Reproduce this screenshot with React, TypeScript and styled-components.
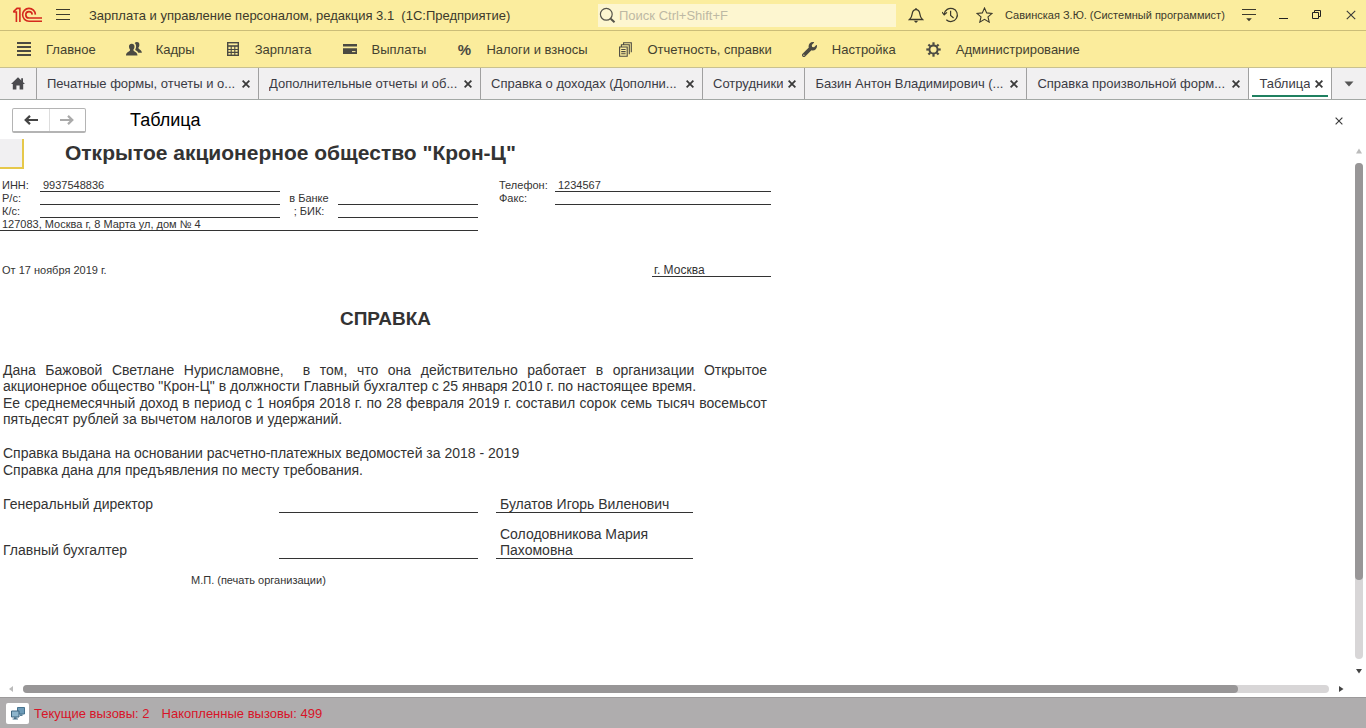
import React from "react";
import styled, { createGlobalStyle, css } from "styled-components";
import { FaWrench } from "react-icons/fa";

const GlobalStyle = createGlobalStyle`
  *, *::before, *::after { box-sizing: border-box; }
  body {
    margin: 0;
    background: #fff;
    color: #333;
    font-family: "Liberation Sans", Arial, sans-serif;
    font-size: 13px;
  }
  button, input { font: inherit; color: inherit; }
  h1, h2, p { margin: 0; }
`;

const Shell = styled.div`
  display: flex;
  flex-direction: column;
  min-height: 100vh;
`;

const plainButton = css`
  display: flex;
  align-items: center;
  justify-content: center;
  flex: none;
  padding: 0;
  border: 0;
  background: none;
  cursor: pointer;
`;

/* Title bar */

const TitleBar = styled.header`
  display: flex;
  align-items: center;
  height: 31px;
  background: #fbed9e;
  border-bottom: 1px solid #cbbd78;
`;

const TitleLeft = styled.div`
  display: flex;
  flex: 1;
  align-items: center;
  min-width: 0;
  gap: 10px;
  padding-left: 13px;
`;

const AppTitle = styled.span`
  padding-left: 6px;
  white-space: pre;
  color: #3c3a2c;
`;

const SearchBox = styled.label`
  display: flex;
  align-items: center;
  width: 298px;
  height: 23px;
  gap: 3px;
  padding-left: 1px;
  background: #fdf6d0;
`;

const SearchInput = styled.input`
  flex: 1;
  min-width: 0;
  padding: 0;
  border: 0;
  outline: 0;
  background: none;
  &::placeholder { color: #bdb9a4; opacity: 1; }
`;

const TitleRight = styled.div`
  display: flex;
  align-items: center;
  gap: 11px;
  padding: 0 5px 0 10px;
`;

const IconGroup = styled.div`
  display: flex;
  gap: 14px;
`;

const IconButton = styled.button`
  ${plainButton}
  width: 20px;
  height: 20px;
`;

const UserName = styled.span`
  min-width: 223px;
  font-size: 11px;
  white-space: nowrap;
  color: #3c3a2c;
`;

/* Section menu */

const Menu = styled.nav`
  display: flex;
  align-items: center;
  height: 37px;
  gap: 30px;
  padding-left: 16px;
  background: #fbec9c;
  border-bottom: 1px solid #c9c18f;
`;

const MenuItem = styled.a`
  display: flex;
  align-items: center;
  gap: 14px;
  color: #43412f;
  text-decoration: none;
  white-space: nowrap;
`;

const MenuIcon = styled.span`
  display: flex;
  align-items: center;
  justify-content: center;
  width: 16px;
  height: 18px;
  color: #4b4a42;
  font-size: 15px;
  font-weight: bold;
`;

/* Tabs */

const TabStrip = styled.div`
  display: flex;
  height: 32px;
  background: #f1f0f1;
  border-bottom: 1px solid #a3a8a5;
`;

const HomeButton = styled.button`
  ${plainButton}
  width: 37px;
  border-right: 1px solid #a0a0a0;
`;

const Tab = styled.div<{ $long?: boolean; $active?: boolean }>`
  position: relative;
  display: flex;
  align-items: center;
  flex: ${(p) => (p.$long ? "0 1 222px" : "0 0 auto")};
  min-width: 0;
  gap: 4px;
  padding: 0 7px 0 10px;
  border-right: 1px solid #a0a0a0;
  background: ${(p) => (p.$active ? "#fff" : "none")};
  ${(p) =>
    p.$active &&
    css`
      &::after {
        content: "";
        position: absolute;
        left: 3px;
        right: 3px;
        bottom: 2px;
        height: 2px;
        background: #1f8060;
      }
    `}
`;

const TabLabel = styled.span`
  flex: 1;
  overflow: hidden;
  white-space: nowrap;
  color: #3b3b44;
`;

const TabClose = styled.button`
  ${plainButton}
  width: 10px;
  height: 14px;
`;

const TabList = styled.button`
  ${plainButton}
  flex: 1;
  min-width: 28px;
`;

/* Form header */

const FormHead = styled.div`
  display: flex;
  align-items: center;
  height: 39px;
  gap: 44px;
  padding: 2px 20px 0 12px;
`;

const NavPair = styled.div`
  display: flex;
  width: 74px;
  height: 25px;
  border: 1px solid #b4b4b4;
  border-bottom-width: 2px;
  border-radius: 2px;
  background: #fff;
`;

const NavButton = styled.button`
  ${plainButton}
  flex: 1;
  & + & { border-left: 1px solid #ddd; }
`;

const FormTitle = styled.h1`
  flex: 1;
  font-size: 18px;
  font-weight: normal;
  color: #000;
`;

const FormClose = styled.button`
  ${plainButton}
  width: 14px;
  height: 14px;
`;

/* Spreadsheet document */

const Workspace = styled.div`
  display: flex;
  flex: 1;
`;

const Sheet = styled.main`
  flex: 1;
  min-width: 0;
`;

const Page = styled.article`
  width: 771px;
  max-width: 100%;
`;

const OrgRow = styled.div`
  display: flex;
  align-items: flex-start;
  height: 40px;
  gap: 41px;
`;

const ActiveCell = styled.div`
  width: 24px;
  height: 30px;
  background: #f1f0f2;
  border: solid #e6c84a;
  border-width: 0 2px 2px 0;
`;

const OrgName = styled.h2`
  font-size: 21px;
  line-height: 28px;
  white-space: nowrap;
`;

const Requisites = styled.div`
  display: grid;
  grid-template-columns: 40px 240px 58px 140px 21px 56px 216px;
  grid-auto-rows: 13px;
  font-size: 11px;
  line-height: 13px;
`;

const Caption = styled.span<{ $column?: number; $center?: boolean }>`
  grid-column: ${(p) => p.$column ?? "auto"};
  padding-left: ${(p) => (p.$center || p.$column ? 0 : 2)}px;
  text-align: ${(p) => (p.$center ? "center" : "left")};
  white-space: nowrap;
`;

const Field = styled.span<{ $wide?: boolean }>`
  grid-column: ${(p) => (p.$wide ? "1 / span 4" : "auto")};
  padding-left: ${(p) => (p.$wide ? 2 : 3)}px;
  border-bottom: 1px solid #333;
  white-space: nowrap;
`;

const DateRow = styled.div`
  display: flex;
  justify-content: space-between;
  margin-top: 33px;
  padding-left: 2px;
  font-size: 11px;
  line-height: 12px;
`;

const City = styled.span`
  width: 119px;
  padding-left: 2px;
  border-bottom: 1px solid #333;
  font-size: 12px;
`;

const DocTitle = styled.h2`
  margin: 30px 0 31px;
  font-size: 19px;
  line-height: 24px;
  text-align: center;
`;

const Paragraph = styled.p<{ $spaced?: boolean }>`
  margin-top: ${(p) => (p.$spaced ? 18 : 1)}px;
  padding: 0 4px 0 3px;
  font-size: 14px;
  line-height: 16px;
  text-align: justify;
`;

const Signature = styled.div<{ $first?: boolean }>`
  display: grid;
  grid-template-columns: 279px 199px 197px;
  margin-top: ${(p) => (p.$first ? 18 : 13)}px;
  font-size: 14px;
  line-height: 16px;
`;

const Post = styled.span`
  align-self: end;
  padding: 0 0 1px 3px;
`;

const SignLine = styled.span`
  border-bottom: 1px solid #333;
`;

const SignName = styled.span`
  margin: 0 -18px 0 18px;
  padding-left: 4px;
  border-bottom: 1px solid #333;
`;

const Stamp = styled.p`
  margin-top: 15px;
  padding-left: 191px;
  font-size: 11px;
  line-height: 13px;
`;

/* Scroll bars */

const VScroll = styled.div`
  display: flex;
  flex-direction: column;
  align-items: center;
  width: 8px;
  gap: 8px;
  margin-right: 3px;
  padding: 8px 0;
`;

const HScroll = styled.div`
  display: flex;
  align-items: center;
  height: 14px;
  gap: 8px;
  padding: 0 21px 2px 7px;
`;

const ScrollArrow = styled.button`
  ${plainButton}
  width: 8px;
  height: 8px;
`;

const Track = styled.div<{ $vertical?: boolean }>`
  flex: 1;
  ${(p) => (p.$vertical ? "width: 8px;" : "height: 8px;")}
  border-radius: 4px;
  background: #d8d6d7;
`;

const Thumb = styled.div<{ $vertical?: boolean }>`
  width: ${(p) => (p.$vertical ? "100%" : "93%")};
  height: ${(p) => (p.$vertical ? "84%" : "100%")};
  border-radius: 4px;
  background: #989697;
`;

/* Status bar */

const StatusBar = styled.footer`
  display: flex;
  align-items: center;
  height: 31px;
  gap: 12px;
  padding: 0 6px;
  border-top: 1px solid #9c9a9b;
  background: #afadae;
  color: #d81428;
`;

const CallsButton = styled.button`
  ${plainButton}
  width: 23px;
  height: 21px;
  margin-right: -7px;
  border-radius: 2px;
  background: #fff;
`;

/* Drawings */

const Logo = () => (
  <svg width="30" height="16" viewBox="0 0 30 16" fill="none" stroke="#d5291d" strokeWidth="1.6">
    <path d="M.2 5H3.4V15M.2 5L4 1.4H6.9V15" />
    <path d="M22.4 7.6A6.4 6.4 0 1 0 16 14.2H29" />
    <path d="M19.2 7.6A3.2 3.2 0 1 0 16 11H29" />
  </svg>
);

const Burger = () => (
  <svg width="14" height="14" viewBox="0 0 14 14" stroke="#3c3a2c">
    <path d="M0 1.5H14M0 6.5H14M0 11.5H14" />
  </svg>
);

const SearchIcon = () => (
  <svg width="17" height="17" viewBox="0 0 17 17" fill="none" stroke="#55534a">
    <circle cx="7.3" cy="7.3" r="5.9" strokeWidth="1.2" />
    <path d="M11.7 11.7L15.5 15.2" strokeWidth="2" />
  </svg>
);

const Bell = () => (
  <svg width="16" height="16" viewBox="0 0 16 16" fill="none" stroke="#3c3a2c" strokeWidth="1.3">
    <path d="M1.5 12.5C3.6 10.8 3.9 9.4 4.2 6.8C4.5 4.2 5.9 2.7 8 2.7S11.5 4.2 11.8 6.8C12.1 9.4 12.4 10.8 14.5 12.5Z" />
    <path d="M8 2.7V1" />
    <path d="M5.7 13.8H10.3L8 16Z" fill="#3c3a2c" stroke="none" />
  </svg>
);

const History = () => (
  <svg width="17" height="16" viewBox="0 0 17 16" fill="none" stroke="#3c3a2c" strokeWidth="1.2">
    <path d="M2.2 7.2A6.6 6.6 0 1 1 4.3 12.8" />
    <path d="M0 5L2.2 7.8L5 5.4" />
    <path d="M8.6 3.8V8.4L11.6 11" />
  </svg>
);

const Star = () => (
  <svg width="17" height="16" viewBox="0 0 17 16" fill="none" stroke="#3c3a2c" strokeWidth="1.1">
    <path d="M8.5 1L10.7 5.9L16 6.4L12 9.9L13.2 15.1L8.5 12.3L3.8 15.1L5 9.9L1 6.4L6.3 5.9Z" />
  </svg>
);

const Options = () => (
  <svg width="14" height="14" viewBox="0 0 14 14" stroke="#3c3a2c" fill="#3c3a2c">
    <path d="M0 1.5H14M0 6.5H14" />
    <path d="M4.2 10.2H9.8L7 13.2Z" stroke="none" />
  </svg>
);

const Minimize = () => (
  <svg width="10" height="10" viewBox="0 0 10 10" stroke="#222">
    <path d="M1 8.5H10" />
  </svg>
);

const Restore = () => (
  <svg width="10" height="10" viewBox="0 0 10 10" fill="none" stroke="#222">
    <path d="M.5 2.5H6.5V8.5H.5ZM2.5 2.5V.5H8.5V6.5H6.5" />
  </svg>
);

const Cross = ({ size = 9, weight = 1 }: { size?: number; weight?: number }) => (
  <svg width={size} height={size} viewBox="0 0 9 9" stroke="#3a3a3a" strokeWidth={weight}>
    <path d="M.7 .7L8.3 8.3M8.3 .7L.7 8.3" />
  </svg>
);

const Lines = () => (
  <svg width="14" height="14" viewBox="0 0 14 14" stroke="currentColor" strokeWidth="2">
    <path d="M0 1H14M0 5H14M0 9H14M0 13H14" />
  </svg>
);

const People = () => (
  <svg width="17" height="16" viewBox="0 0 17 16" fill="currentColor">
    <path d="M11.6 .6C13.5 .6 14.4 1.9 14.2 3.9C14.1 5.3 13.6 6 13.1 6.6C13.1 8.4 16.9 8.6 16.9 12H13C12.4 10.2 10.9 9.7 9.7 9C10.5 7.6 10.9 6 10.6 4.4C10.4 3 9.9 2.2 9.2 1.8C9.7 1 10.5 .6 11.6 .6Z" />
    <path d="M6.1 2.4C8.2 2.4 9.3 3.8 9 6C8.8 7.5 8.3 8.2 7.8 8.8C7.8 11 12.2 10.8 12.2 15H0C0 10.8 4.4 11 4.4 8.8C3.9 8.2 3.4 7.5 3.2 6C2.9 3.8 4 2.4 6.1 2.4Z" />
  </svg>
);

const Calculator = () => (
  <svg width="12" height="14" viewBox="0 0 12 14" fill="none" stroke="currentColor">
    <rect x=".7" y=".7" width="10.6" height="12.6" strokeWidth="1.4" />
    <path d="M1 4H11" strokeWidth="1.6" />
    <path d="M1 7.5H11M1 10.4H11M4.2 4V13M7.8 4V13" strokeWidth="1.1" />
  </svg>
);

const Card = () => (
  <svg width="14" height="10" viewBox="0 0 14 10" fill="currentColor">
    <path d="M0 0H14V2.5H0ZM0 4.2H14V10H0Z" />
    <path d="M9 7.6H12.5" stroke="#fbec9c" />
  </svg>
);

const Papers = () => (
  <svg width="13" height="15" viewBox="0 0 13 15" fill="none" stroke="currentColor" strokeWidth="1.1">
    <path d="M.6 5H8.2V14.2H.6ZM2.4 5V2.8H10.3V12.2M4.6 2.8V.7H12.3V10.2" />
    <path d="M2.2 7.5H6.6M2.2 9.6H6.6M2.2 11.7H6.6" />
  </svg>
);

const Gear = () => (
  <svg width="15" height="15" viewBox="-7.5 -7.5 15 15" fill="none" stroke="currentColor">
    <circle r="4.1" strokeWidth="2" />
    {[0, 45, 90, 135, 180, 225, 270, 315].map((angle) => (
      <path key={angle} d="M0 -4.6V-7.2" strokeWidth="2.2" transform={`rotate(${angle})`} />
    ))}
  </svg>
);

const Home = () => (
  <svg width="14" height="13" viewBox="0 0 14 13" fill="#4a4a4e">
    <path d="M7 .3L14 7H12.2V12.6H8.6V8.4H5.4V12.6H1.8V7H0Z" />
    <path d="M10.2 1.2H12V5H10.2Z" />
  </svg>
);

const Arrow = ({ forward }: { forward?: boolean }) => (
  <svg width="14" height="10" viewBox="0 0 14 10" fill="none" stroke={forward ? "#aaa" : "#444"} strokeWidth="2.2">
    <path d={forward ? "M0 5H12M8 .9L12.3 5L8 9.1" : "M14 5H2M6 .9L1.7 5L6 9.1"} />
  </svg>
);

const arrowShapes = {
  up: "M1 6.5L4 1.5L7 6.5Z",
  down: "M1 2L7 2L4 6.5Z",
  left: "M6 1L2 4L6 7Z",
  right: "M2 1L6.5 4L2 7Z",
};

const SmallArrow = ({ to, pale }: { to: keyof typeof arrowShapes; pale?: boolean }) => (
  <svg width="8" height="8" viewBox="0 0 8 8" fill={pale ? "#bbb" : "#444"}>
    <path d={arrowShapes[to]} />
  </svg>
);

const Computers = () => (
  <svg width="14" height="13" viewBox="0 0 14 13">
    <path d="M6.5 .5H13.5V7H6.5Z" fill="#6d9bb8" stroke="#47738f" />
    <path d="M9 7.2H11.5V9H9Z" fill="#58819b" />
    <path d="M.5 4H8V10H.5Z" fill="#8db5cc" stroke="#3f6680" />
    <path d="M3 10.2H5.6V11.4H7V12.6H1.6V11.4H3Z" fill="#47708a" />
  </svg>
);

const sections = [
  { name: "Главное", icon: <Lines /> },
  { name: "Кадры", icon: <People /> },
  { name: "Зарплата", icon: <Calculator /> },
  { name: "Выплаты", icon: <Card /> },
  { name: "Налоги и взносы", icon: "%" },
  { name: "Отчетность, справки", icon: <Papers /> },
  { name: "Настройка", icon: <FaWrench size={15} /> },
  { name: "Администрирование", icon: <Gear /> },
];

const tabs = [
  { name: "Печатные формы, отчеты и о...", long: true },
  { name: "Дополнительные отчеты и об...", long: true },
  { name: "Справка о доходах (Дополни...", long: true },
  { name: "Сотрудники" },
  { name: "Базин Антон Владимирович (...", long: true },
  { name: "Справка произвольной форм...", long: true },
  { name: "Таблица", active: true },
];

const employment =
  "Дана Бажовой Светлане Нурисламовне,\u00a0 в том, что она действительно работает в организации " +
  'Открытое акционерное общество "Крон-Ц" в должности Главный бухгалтер с 25 января 2010 г. ' +
  "по настоящее время.";

const income =
  "Ее среднемесячный доход в период с 1 ноября 2018 г. по 28 февраля 2019 г. составил сорок семь " +
  "тысяч восемьсот пятьдесят рублей за вычетом налогов и удержаний.";

export default function App() {
  return (
    <Shell>
      <GlobalStyle />
      <TitleBar>
        <TitleLeft>
          <Logo />
          <IconButton aria-label="Меню"><Burger /></IconButton>
          <AppTitle>{"Зарплата и управление персоналом, редакция 3.1  (1С:Предприятие)"}</AppTitle>
        </TitleLeft>
        <SearchBox>
          <SearchIcon />
          <SearchInput type="text" aria-label="Поиск" placeholder="Поиск Ctrl+Shift+F" />
        </SearchBox>
        <TitleRight>
          <IconGroup>
            <IconButton aria-label="Оповещения"><Bell /></IconButton>
            <IconButton aria-label="История"><History /></IconButton>
            <IconButton aria-label="Избранное"><Star /></IconButton>
          </IconGroup>
          <UserName>Савинская З.Ю. (Системный программист)</UserName>
          <IconGroup>
            <IconButton aria-label="Настройки"><Options /></IconButton>
            <IconButton aria-label="Свернуть"><Minimize /></IconButton>
            <IconButton aria-label="Развернуть"><Restore /></IconButton>
            <IconButton aria-label="Закрыть"><Cross size={10} /></IconButton>
          </IconGroup>
        </TitleRight>
      </TitleBar>

      <Menu>
        {sections.map((s) => (
          <MenuItem href="#" key={s.name}>
            <MenuIcon>{s.icon}</MenuIcon>
            {s.name}
          </MenuItem>
        ))}
      </Menu>

      <TabStrip>
        <HomeButton aria-label="Начальная страница"><Home /></HomeButton>
        {tabs.map((t) => (
          <Tab key={t.name} $long={t.long} $active={t.active}>
            <TabLabel>{t.name}</TabLabel>
            <TabClose aria-label="Закрыть вкладку"><Cross size={8} weight={2} /></TabClose>
          </Tab>
        ))}
        <TabList aria-label="Список вкладок">
          <svg width="10" height="6" viewBox="0 0 10 6" fill="#555"><path d="M.5 .5H9.5L5 5.5Z" /></svg>
        </TabList>
      </TabStrip>

      <FormHead>
        <NavPair>
          <NavButton aria-label="Назад"><Arrow /></NavButton>
          <NavButton aria-label="Вперед"><Arrow forward /></NavButton>
        </NavPair>
        <FormTitle>Таблица</FormTitle>
        <FormClose aria-label="Закрыть форму"><Cross size={8} weight={1.3} /></FormClose>
      </FormHead>

      <Workspace>
        <Sheet>
          <Page>
            <OrgRow>
              <ActiveCell />
              <OrgName>Открытое акционерное общество "Крон-Ц"</OrgName>
            </OrgRow>

            <Requisites>
              <Caption>ИНН:</Caption>
              <Field>9937548836</Field>
              <Caption $column={6}>Телефон:</Caption>
              <Field>1234567</Field>
              <Caption>Р/с:</Caption>
              <Field />
              <Caption $center>в Банке</Caption>
              <Field />
              <Caption $column={6}>Факс:</Caption>
              <Field />
              <Caption>К/с:</Caption>
              <Field />
              <Caption $center>; БИК:</Caption>
              <Field />
              <Field $wide>127083, Москва г, 8 Марта ул, дом № 4</Field>
            </Requisites>

            <DateRow>
              <span>От 17 ноября 2019 г.</span>
              <City>г. Москва</City>
            </DateRow>

            <DocTitle>СПРАВКА</DocTitle>

            <Paragraph>{employment}</Paragraph>
            <Paragraph>{income}</Paragraph>
            <Paragraph $spaced>Справка выдана на основании расчетно-платежных ведомостей за 2018 - 2019</Paragraph>
            <Paragraph>Справка дана для предъявления по месту требования.</Paragraph>

            <Signature $first>
              <Post>Генеральный директор</Post>
              <SignLine />
              <SignName>Булатов Игорь Виленович</SignName>
            </Signature>
            <Signature>
              <Post>Главный бухгалтер</Post>
              <SignLine />
              <SignName>Солодовникова Мария Пахомовна</SignName>
            </Signature>
            <Stamp>М.П. (печать организации)</Stamp>
          </Page>
        </Sheet>
        <VScroll>
          <ScrollArrow aria-label="Вверх"><SmallArrow to="up" pale /></ScrollArrow>
          <Track $vertical><Thumb $vertical /></Track>
          <ScrollArrow aria-label="Вниз"><SmallArrow to="down" /></ScrollArrow>
        </VScroll>
      </Workspace>
      <HScroll>
        <ScrollArrow aria-label="Влево"><SmallArrow to="left" pale /></ScrollArrow>
        <Track><Thumb /></Track>
        <ScrollArrow aria-label="Вправо"><SmallArrow to="right" /></ScrollArrow>
      </HScroll>

      <StatusBar>
        <CallsButton aria-label="Вызовы сервера"><Computers /></CallsButton>
        <span>Текущие вызовы: 2</span>
        <span>Накопленные вызовы: 499</span>
      </StatusBar>
    </Shell>
  );
}
